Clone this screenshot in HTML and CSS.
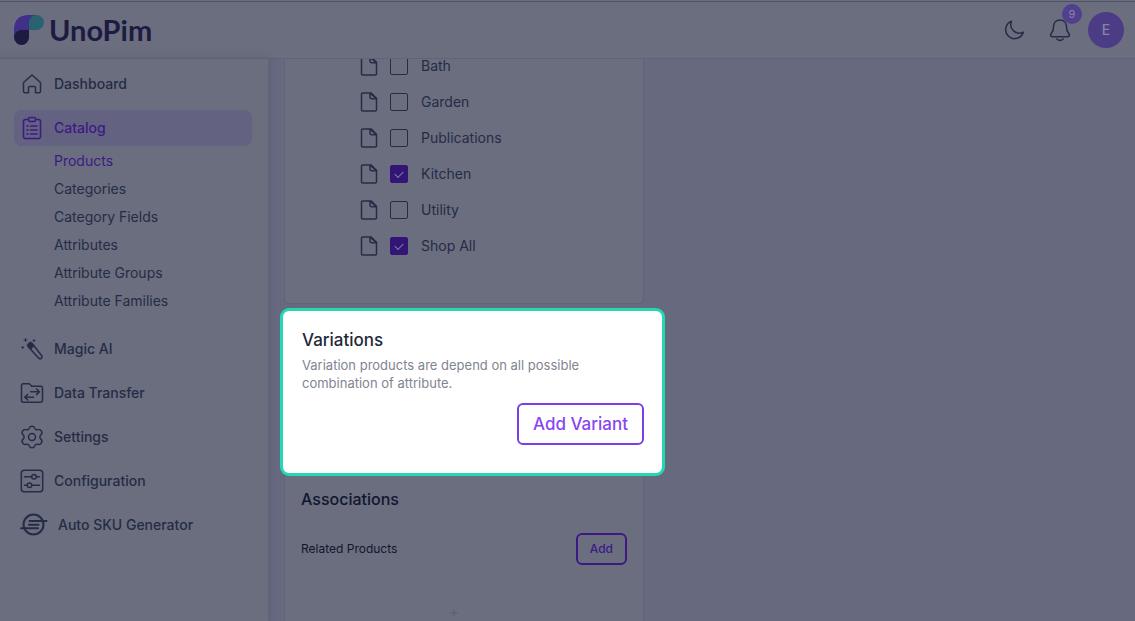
FILE: index.html
```
<!DOCTYPE html>
<html lang="en">
<head>
<meta charset="utf-8">
<title>UnoPim</title>
<meta name="viewport" content="width=device-width, initial-scale=1">
<link rel="stylesheet" href="styles.css">
</head>
<body>
<svg class="defs" aria-hidden="true">
  <symbol id="file" viewBox="0 0 18 20"><path d="M11 .9H2.800Q1.500.9 1.500 2.200v15.600q0 1.300 1.300 1.300h12.400q1.300 0 1.300-1.300V6.200zM10 1.200v3.500q0 2 2 2h4.500L10 1.200" /></symbol>
</svg>
<div class="app">
  <header class="topbar">
    <a class="brand" href="#">
      <svg class="brand-mark" viewBox="0 0 30 30" aria-hidden="true">
        <path d="M0 15C0 5 5 0 15 0h8L15 15v7H0z" fill="#41308a"/>
        <path d="M15 15V7.500a7.500 7.500 0 1 1 7.500 7.500z" fill="#28636f"/>
        <path d="M15 15H7.500A7.500 7.500 0 1 0 15 22.500z" fill="#1d1b41"/>
      </svg>
      <span class="brand-name">UnoPim</span>
    </a>
    <div class="tools">
      <button class="tool" aria-label="Dark mode"><svg width="24" height="24" viewBox="0 0 24 24"><path d="M9.500 3.200A9 9 0 1 0 21.300 14.200C14 17.500 6.500 11 9.500 3.200z"/></svg></button>
      <button class="tool bell" aria-label="Notifications"><svg width="24" height="24" viewBox="0 0 24 24"><path d="M12 2c-4 0-6.500 3-6.500 7 0 3-.6 4.500-2.200 6.500-1.300 1.700-.8 3.200 1.200 3.200h15c2 0 2.500-1.500 1.200-3.200-1.600-2-2.200-3.500-2.200-6.500 0-4-2.500-7-6.500-7zM8.800 21q3.200 2.800 6.400 0"/></svg><span class="badge">9</span></button>
      <button class="avatar">E</button>
    </div>
  </header>
  <div class="body">
    <nav class="sidebar">
      <a class="item" href="#"><svg viewBox="0 0 24 24"><path d="M3.500 10.500 12 3l8.500 7.500v8.700q0 1.600-1.600 1.600h-3.400v-5.500q0-.8-.8-.8H9.300q-.8 0-.8.8v5.500H5.100q-1.600 0-1.600-1.600z"/></svg>Dashboard</a>
      <a class="item active" href="#"><svg viewBox="0 0 24 24"><path d="M8.500 3.500H5.500q-2 0-2 2v15q0 2 2 2h13q2 0 2-2v-15q0-2-2-2h-3M10 1.500h4q1.500 0 1.500 1.500v1q0 1.500-1.500 1.500h-4Q8.500 5.500 8.500 4V3q0-1.500 1.500-1.500zM10.500 10H17M10.500 14H17M10.500 18H17M7 10h1M7 14h1M7 18h1"/></svg>Catalog</a>
      <div class="sub">
        <a class="current" href="#">Products</a>
        <a href="#">Categories</a>
        <a href="#">Category Fields</a>
        <a href="#">Attributes</a>
        <a href="#">Attribute Groups</a>
        <a href="#">Attribute Families</a>
      </div>
      <a class="item" href="#"><svg viewBox="0 0 24 24"><path d="M8.800 8.200 12 6.200l9.700 12.600q1 1.500-.4 2.500-1.500 1.200-2.700-.2L8.500 10z"/><path class="solid" d="M8.500 6.800 10.500 5.300l3 3.700-3 2.800-3-3.300z"/><path class="stars" d="M5.500 1.500v3M4 3h3M2.800 9.500v2M1.800 10.500h2M14 2.500v2M13 3.500h2"/></svg>Magic AI</a>
      <a class="item" href="#"><svg viewBox="0 0 24 24"><path d="M1.500 19.500v-15q0-1.700 1.700-1.700h5.500q1 0 1.600.8L11.600 5.200h9.200q1.700 0 1.700 1.700v12.600q0 1.700-1.700 1.700H3.200q-1.700 0-1.700-1.700zM10.500 10.800h8.800M16.500 8l3 2.800-3 2.800M13.500 16.200H4.800M7.700 13.400l-3 2.800 3 2.800"/></svg>Data Transfer</a>
      <a class="item" href="#"><svg viewBox="0 0 24 24"><path d="M9.500 2.600Q10 1.300 12 1.300t2.500 1.300c.6 2 2 2.700 3.700 2 1.800-.6 2.500.3 3.200 1.500.8 1.500 1 2.500-.3 3.500-1.600 1.300-1.600 3.500 0 4.800 1.300 1 1.100 2 .3 3.500-.7 1.200-1.400 2.100-3.200 1.500-1.700-.7-3.100 0-3.700 2-.5 1.300-1 1.300-2.500 1.300s-2 0-2.500-1.300c-.6-2-2-2.700-3.700-2-1.800.6-2.500-.3-3.200-1.500-.8-1.500-1-2.500.3-3.500 1.600-1.300 1.600-3.500 0-4.800-1.300-1-1.100-2-.3-3.500.7-1.200 1.400-2.100 3.200-1.500 1.700.7 3.100 0 3.700-2z"/><circle cx="12" cy="12" r="3.500"/></svg>Settings</a>
      <a class="item" href="#"><svg viewBox="0 0 24 24"><rect x="1.300" y="1.300" width="21.400" height="21.400" rx="3"/><path d="M4.500 7.700h7M16.500 7.700h3M4.500 16.200h2.500M12 16.200h7.500"/><circle cx="14" cy="7.700" r="2.300"/><circle cx="9.500" cy="16.200" r="2.300"/></svg>Configuration</a>
      <a class="item wide" href="#"><svg class="bold" viewBox="0 0 28 24"><circle cx="13.500" cy="11.500" r="10"/><path d="M9.500 8H26.500M9 11.700h9.500M1 15.300h17"/></svg>Auto SKU Generator</a>
    </nav>
    <main class="content">
      <div class="column">
        <section class="panel tree">
          <label class="node"><svg><use href="#file"/></svg><input type="checkbox">Bath</label>
          <label class="node"><svg><use href="#file"/></svg><input type="checkbox">Garden</label>
          <label class="node"><svg><use href="#file"/></svg><input type="checkbox">Publications</label>
          <label class="node"><svg><use href="#file"/></svg><input type="checkbox" checked>Kitchen</label>
          <label class="node"><svg><use href="#file"/></svg><input type="checkbox">Utility</label>
          <label class="node"><svg><use href="#file"/></svg><input type="checkbox" checked>Shop All</label>
        </section>
        <section class="spotlight">
          <h2>Variations</h2>
          <p>Variation products are depend on all possible combination of attribute.</p>
          <button class="outline large">Add Variant</button>
        </section>
        <section class="panel associations">
          <h2>Associations</h2>
          <div class="related"><span>Related Products</span><button class="outline">Add</button></div>
          <svg class="spark" viewBox="0 0 8 8" aria-hidden="true"><path d="M4 1v6M1 4h6"/></svg>
        </section>
      </div>
    </main>
  </div>
</div>
</body>
</html>
```
FILE: styles.css
```
:root {
  --surface: #6b6e7e;
  --page: #67697f;
  --line: #606379;
  --ink: #242c47;
  --purple: #3b1a84;
}
* { box-sizing: border-box; }
body {
  margin: 0;
  background: var(--page);
  color: var(--ink);
  font-family: Inter, "Liberation Sans", sans-serif;
  font-size: 14px;
  line-height: 20px;
}
a { color: inherit; text-decoration: none; }
button { font: inherit; color: inherit; background: none; border: 0; padding: 0; cursor: pointer; }
h2, p { margin: 0; }
svg { fill: none; stroke: currentColor; stroke-width: 1.500; stroke-linecap: round; stroke-linejoin: round; flex: none; }
.defs { position: absolute; width: 0; height: 0; }
.app { height: 100vh; display: flex; flex-direction: column; overflow: hidden; border-top: 1px solid var(--surface); }
.topbar {
  flex: none;
  height: 58px;
  padding: 0 11px 0 14px;
  display: flex;
  align-items: center;
  justify-content: space-between;
  background: var(--surface);
  border-top: 1px solid #4f5265;
  border-bottom: 1px solid var(--line);
}
.brand { display: flex; align-items: center; gap: 5px; }
.brand-mark { width: 30px; height: 30px; stroke: none; }
.brand-name { color: #1d1b41; font-family: Lato, sans-serif; font-size: 29px; font-weight: 700; line-height: 32px; }
.tools { display: flex; align-items: center; }
.tool { width: 24px; height: 24px; margin-right: 22px; display: flex; }
.bell { position: relative; margin-right: 16px; }
.badge {
  position: absolute;
  left: 14px;
  top: -14px;
  width: 20px;
  height: 20px;
  border-radius: 50%;
  background: #523f8e;
  color: #8584a6;
  font-size: 11px;
}
.avatar { width: 36px; height: 36px; border-radius: 50%; background: #4c3c85; color: #8584a6; font-weight: 500; }
.body { flex: 1; min-height: 0; display: flex; }
.sidebar {
  flex: none;
  width: 268px;
  padding: 7px 16px 0 14px;
  background: var(--surface);
  box-shadow: 1px 0 8px #5b5d73;
}
.item { display: flex; align-items: center; gap: 10px; height: 36px; margin-bottom: 8px; padding-left: 6px; border-radius: 8px; font-weight: 500; line-height: 22px; }
.item svg { width: 24px; height: 24px; }
.item.active { margin-bottom: 0; background: #636281; color: var(--purple); }
.item.wide svg { width: 28px; }
.item svg.bold { stroke-width: 2; }
.solid { fill: currentColor; }
.stars { stroke-width: 1; }
.sub { padding: 1px 0 16px 40px; }
.sub a { display: block; line-height: 28px; }
.sub .current { color: var(--purple); }
.content { flex: 1; min-width: 0; padding: 0 16px; overflow: hidden; }
.column { width: 360px; display: flex; flex-direction: column; }
.panel { background: var(--surface); border: 1px solid var(--line); border-radius: 4px; padding: 0 16px; }
.tree { margin-top: -12px; padding: 0 75px 39px; }
.node { display: flex; align-items: center; height: 36px; }
.node svg { width: 18px; height: 20px; margin-right: 12px; }
.node input { appearance: none; width: 18px; height: 18px; margin: 0 13px 0 0; border: 1px solid var(--ink); border-radius: 2px; display: grid; place-items: center; }
.node input:checked { background: #321575; border-color: #321575; }
.node input:checked::after { content: ""; width: 7px; height: 4px; border: solid #8584a6; border-width: 0 0 1px 1px; transform: rotate(-45deg); margin-bottom: 2px; }
.spotlight {
  position: relative;
  margin: 4px -21px 0 -4px;
  padding: 17px 18px 28px 19px;
  display: flex;
  flex-direction: column;
  background: #fff;
  border: 3px solid #22d9b4;
  border-radius: 9px;
}
.spotlight h2 { font-size: 17px; line-height: 24px; font-weight: 500; color: #1f2937; }
.spotlight p { max-width: 300px; margin: 4px 0 11px; font-size: 13px; line-height: 18px; color: #808590; }
.outline { border: 2px solid var(--purple); border-radius: 6px; height: 32px; padding: 0 12px; color: var(--purple); font-size: 12px; font-weight: 500; }
.outline.large { align-self: flex-end; height: 42px; padding: 0 14px; border-color: #7c3fe4; color: #8746f0; font-size: 17px; font-weight: 500; }
.associations { margin-top: -6px; height: 180px; padding-top: 18px; color: #10162f; }
.associations h2 { font-size: 16px; line-height: 20px; font-weight: 500; }
.related { display: flex; align-items: center; justify-content: space-between; margin-top: 24px; font-size: 12px; }
.spark { display: block; width: 8px; height: 8px; margin: 44px 169px 0 auto; color: var(--line); }
```
